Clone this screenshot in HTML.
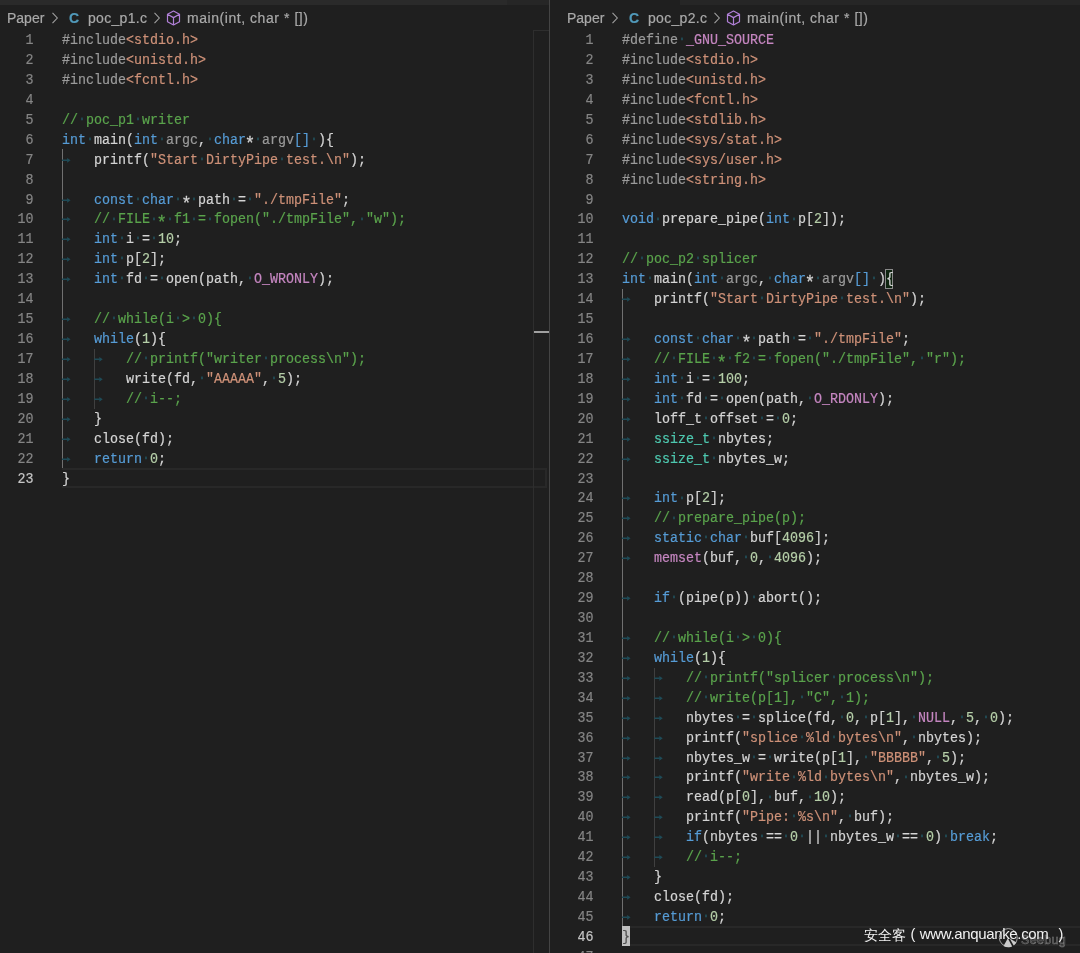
<!DOCTYPE html><html><head><meta charset="utf-8"><style>
*{margin:0;padding:0;box-sizing:border-box}
html,body{width:1080px;height:953px;overflow:hidden;background:#1f1f1f}
body{position:relative;font-family:"Liberation Mono",monospace}
.pane{position:absolute;top:0;height:953px;overflow:hidden;will-change:transform}
.strip{position:absolute;top:0;height:5px}
.cl{position:absolute;white-space:pre;font-size:14.5px;line-height:19.93px;height:19.93px;color:#d4d4d4;transform:scaleX(0.9195);transform-origin:0 0;padding-top:1.2px;-webkit-text-stroke:0.2px currentColor}
.ln{position:absolute;width:43.5px;text-align:right;font-size:14.5px;line-height:19.93px;color:#858585;padding-top:1.2px;-webkit-text-stroke:0.2px currentColor;transform:scaleX(0.9195);transform-origin:100% 0}
.ln.act{color:#c6c6c6}
.k{color:#569cd6}.ty{color:#4ec9b0}.m{color:#c586c0}.pa{color:#9a9a9a}.s{color:#ce9178}.n{color:#b5cea8}.c{color:#5aa34c}.pp{color:#9b9b9b}
i.d{font-style:normal;color:#22505c;-webkit-text-stroke:0.3px currentColor;position:relative;top:-0.9px}
.ast{display:inline-block;width:1ch;transform:translateY(3.6px) scale(1.3)}
b.t{display:inline-block;width:4ch;height:19.93px;vertical-align:top;position:relative}
b.t svg{position:absolute;left:0;top:0}
.g{position:absolute;width:1px;background:#404040}
.ga{position:absolute;width:1px;background:#707070}
.cur{position:absolute;height:20px;border:2px solid #282828;border-left:0}
.bc{position:absolute;top:9.4px;-webkit-text-stroke:0.2px currentColor;height:22px;font-family:"Liberation Sans",sans-serif;font-size:14px;color:#a9a9a9;white-space:pre;line-height:18px}
</style></head><body><div class="pane" style="left:0;width:549px"><div class="strip" style="left:0;width:507px;background:#2a2a2a"></div><div class="strip" style="left:507px;width:42px;background:#262626"></div><div class="bc" style="left:7px">Paper</div><svg style="position:absolute;left:51px;top:11.5px" width="8" height="12" viewBox="0 0 8 12"><path d="M1.5 0.8 L6.3 6 L1.5 11.2" fill="none" stroke="#a0a0a0" stroke-width="1.1"/></svg><div class="bc" style="left:69px;font-weight:bold;color:#519aba">C</div><div class="bc" style="left:88px;letter-spacing:0.3px">poc_p1.c</div><svg style="position:absolute;left:153px;top:11.5px" width="8" height="12" viewBox="0 0 8 12"><path d="M1.5 0.8 L6.3 6 L1.5 11.2" fill="none" stroke="#a0a0a0" stroke-width="1.1"/></svg><svg style="position:absolute;left:166px;top:10px" width="15" height="16" viewBox="0 0 15 16"><path d="M7.5 1 L13.5 4.3 L13.5 11.7 L7.5 15 L1.5 11.7 L1.5 4.3 Z M1.5 4.3 L7.5 7.6 L13.5 4.3 M7.5 7.6 L7.5 15" fill="none" stroke="#b180d7" stroke-width="1.2" stroke-linejoin="round"/></svg><div class="bc" style="left:187px;letter-spacing:0.55px">main(int, char * [])</div><div class="ga" style="left:62px;top:149.48px;height:318.88px"></div><div class="g" style="left:94px;top:348.78px;height:59.79px"></div><div class="ln" style="left:-10px;top:29.90px">1</div><div class="cl" style="left:62px;top:29.90px"><span class="pp">#include</span><span class="s">&lt;stdio.h&gt;</span></div><div class="ln" style="left:-10px;top:49.83px">2</div><div class="cl" style="left:62px;top:49.83px"><span class="pp">#include</span><span class="s">&lt;unistd.h&gt;</span></div><div class="ln" style="left:-10px;top:69.76px">3</div><div class="cl" style="left:62px;top:69.76px"><span class="pp">#include</span><span class="s">&lt;fcntl.h&gt;</span></div><div class="ln" style="left:-10px;top:89.69px">4</div><div class="cl" style="left:62px;top:89.69px"></div><div class="ln" style="left:-10px;top:109.62px">5</div><div class="cl" style="left:62px;top:109.62px"><span class="c">//</span><i class="d">·</i><span class="c">poc_p1</span><i class="d">·</i><span class="c">writer</span></div><div class="ln" style="left:-10px;top:129.55px">6</div><div class="cl" style="left:62px;top:129.55px"><span class="k">int</span><i class="d">·</i>main(<span class="k">int</span><i class="d">·</i><span class="pa">argc</span>,<i class="d">·</i><span class="k">char</span><span class="ast">*</span><i class="d">·</i><span class="pa">argv</span><span class="k">[]</span><i class="d">·</i>){</div><div class="ln" style="left:-10px;top:149.48px">7</div><div class="cl" style="left:62px;top:149.48px"><b class="t"><svg width="10" height="20" viewBox="0 0 10 20"><path d="M0 9.3 H6.2" stroke="#1f4b57" stroke-width="1.5"/><path d="M5.6 6.9 L9.3 9.3 L5.6 11.7 Z" fill="#1f4b57"/></svg></b>printf(<span class="s">&quot;Start</span><i class="d">·</i><span class="s">DirtyPipe</span><i class="d">·</i><span class="s">test.\n&quot;</span>);</div><div class="ln" style="left:-10px;top:169.41px">8</div><div class="cl" style="left:62px;top:169.41px"></div><div class="ln" style="left:-10px;top:189.34px">9</div><div class="cl" style="left:62px;top:189.34px"><b class="t"><svg width="10" height="20" viewBox="0 0 10 20"><path d="M0 9.3 H6.2" stroke="#1f4b57" stroke-width="1.5"/><path d="M5.6 6.9 L9.3 9.3 L5.6 11.7 Z" fill="#1f4b57"/></svg></b><span class="k">const</span><i class="d">·</i><span class="k">char</span><i class="d">·</i><span class="ast">*</span><i class="d">·</i>path<i class="d">·</i>=<i class="d">·</i><span class="s">&quot;./tmpFile&quot;</span>;</div><div class="ln" style="left:-10px;top:209.27px">10</div><div class="cl" style="left:62px;top:209.27px"><b class="t"><svg width="10" height="20" viewBox="0 0 10 20"><path d="M0 9.3 H6.2" stroke="#1f4b57" stroke-width="1.5"/><path d="M5.6 6.9 L9.3 9.3 L5.6 11.7 Z" fill="#1f4b57"/></svg></b><span class="c">//</span><i class="d">·</i><span class="c">FILE</span><i class="d">·</i><span class="c"><span class="ast">*</span></span><i class="d">·</i><span class="c">f1</span><i class="d">·</i><span class="c">=</span><i class="d">·</i><span class="c">fopen(&quot;./tmpFile&quot;,</span><i class="d">·</i><span class="c">&quot;w&quot;);</span></div><div class="ln" style="left:-10px;top:229.20px">11</div><div class="cl" style="left:62px;top:229.20px"><b class="t"><svg width="10" height="20" viewBox="0 0 10 20"><path d="M0 9.3 H6.2" stroke="#1f4b57" stroke-width="1.5"/><path d="M5.6 6.9 L9.3 9.3 L5.6 11.7 Z" fill="#1f4b57"/></svg></b><span class="k">int</span><i class="d">·</i>i<i class="d">·</i>=<i class="d">·</i><span class="n">10</span>;</div><div class="ln" style="left:-10px;top:249.13px">12</div><div class="cl" style="left:62px;top:249.13px"><b class="t"><svg width="10" height="20" viewBox="0 0 10 20"><path d="M0 9.3 H6.2" stroke="#1f4b57" stroke-width="1.5"/><path d="M5.6 6.9 L9.3 9.3 L5.6 11.7 Z" fill="#1f4b57"/></svg></b><span class="k">int</span><i class="d">·</i>p[<span class="n">2</span>];</div><div class="ln" style="left:-10px;top:269.06px">13</div><div class="cl" style="left:62px;top:269.06px"><b class="t"><svg width="10" height="20" viewBox="0 0 10 20"><path d="M0 9.3 H6.2" stroke="#1f4b57" stroke-width="1.5"/><path d="M5.6 6.9 L9.3 9.3 L5.6 11.7 Z" fill="#1f4b57"/></svg></b><span class="k">int</span><i class="d">·</i>fd<i class="d">·</i>=<i class="d">·</i>open(path,<i class="d">·</i><span class="m">O_WRONLY</span>);</div><div class="ln" style="left:-10px;top:288.99px">14</div><div class="cl" style="left:62px;top:288.99px"></div><div class="ln" style="left:-10px;top:308.92px">15</div><div class="cl" style="left:62px;top:308.92px"><b class="t"><svg width="10" height="20" viewBox="0 0 10 20"><path d="M0 9.3 H6.2" stroke="#1f4b57" stroke-width="1.5"/><path d="M5.6 6.9 L9.3 9.3 L5.6 11.7 Z" fill="#1f4b57"/></svg></b><span class="c">//</span><i class="d">·</i><span class="c">while(i</span><i class="d">·</i><span class="c">&gt;</span><i class="d">·</i><span class="c">0){</span></div><div class="ln" style="left:-10px;top:328.85px">16</div><div class="cl" style="left:62px;top:328.85px"><b class="t"><svg width="10" height="20" viewBox="0 0 10 20"><path d="M0 9.3 H6.2" stroke="#1f4b57" stroke-width="1.5"/><path d="M5.6 6.9 L9.3 9.3 L5.6 11.7 Z" fill="#1f4b57"/></svg></b><span class="k">while</span>(<span class="n">1</span>){</div><div class="ln" style="left:-10px;top:348.78px">17</div><div class="cl" style="left:62px;top:348.78px"><b class="t"><svg width="10" height="20" viewBox="0 0 10 20"><path d="M0 9.3 H6.2" stroke="#1f4b57" stroke-width="1.5"/><path d="M5.6 6.9 L9.3 9.3 L5.6 11.7 Z" fill="#1f4b57"/></svg></b><b class="t"><svg width="10" height="20" viewBox="0 0 10 20"><path d="M0 9.3 H6.2" stroke="#1f4b57" stroke-width="1.5"/><path d="M5.6 6.9 L9.3 9.3 L5.6 11.7 Z" fill="#1f4b57"/></svg></b><span class="c">//</span><i class="d">·</i><span class="c">printf(&quot;writer</span><i class="d">·</i><span class="c">process\n&quot;);</span></div><div class="ln" style="left:-10px;top:368.71px">18</div><div class="cl" style="left:62px;top:368.71px"><b class="t"><svg width="10" height="20" viewBox="0 0 10 20"><path d="M0 9.3 H6.2" stroke="#1f4b57" stroke-width="1.5"/><path d="M5.6 6.9 L9.3 9.3 L5.6 11.7 Z" fill="#1f4b57"/></svg></b><b class="t"><svg width="10" height="20" viewBox="0 0 10 20"><path d="M0 9.3 H6.2" stroke="#1f4b57" stroke-width="1.5"/><path d="M5.6 6.9 L9.3 9.3 L5.6 11.7 Z" fill="#1f4b57"/></svg></b>write(fd,<i class="d">·</i><span class="s">&quot;AAAAA&quot;</span>,<i class="d">·</i><span class="n">5</span>);</div><div class="ln" style="left:-10px;top:388.64px">19</div><div class="cl" style="left:62px;top:388.64px"><b class="t"><svg width="10" height="20" viewBox="0 0 10 20"><path d="M0 9.3 H6.2" stroke="#1f4b57" stroke-width="1.5"/><path d="M5.6 6.9 L9.3 9.3 L5.6 11.7 Z" fill="#1f4b57"/></svg></b><b class="t"><svg width="10" height="20" viewBox="0 0 10 20"><path d="M0 9.3 H6.2" stroke="#1f4b57" stroke-width="1.5"/><path d="M5.6 6.9 L9.3 9.3 L5.6 11.7 Z" fill="#1f4b57"/></svg></b><span class="c">//</span><i class="d">·</i><span class="c">i--;</span></div><div class="ln" style="left:-10px;top:408.57px">20</div><div class="cl" style="left:62px;top:408.57px"><b class="t"><svg width="10" height="20" viewBox="0 0 10 20"><path d="M0 9.3 H6.2" stroke="#1f4b57" stroke-width="1.5"/><path d="M5.6 6.9 L9.3 9.3 L5.6 11.7 Z" fill="#1f4b57"/></svg></b>}</div><div class="ln" style="left:-10px;top:428.50px">21</div><div class="cl" style="left:62px;top:428.50px"><b class="t"><svg width="10" height="20" viewBox="0 0 10 20"><path d="M0 9.3 H6.2" stroke="#1f4b57" stroke-width="1.5"/><path d="M5.6 6.9 L9.3 9.3 L5.6 11.7 Z" fill="#1f4b57"/></svg></b>close(fd);</div><div class="ln" style="left:-10px;top:448.43px">22</div><div class="cl" style="left:62px;top:448.43px"><b class="t"><svg width="10" height="20" viewBox="0 0 10 20"><path d="M0 9.3 H6.2" stroke="#1f4b57" stroke-width="1.5"/><path d="M5.6 6.9 L9.3 9.3 L5.6 11.7 Z" fill="#1f4b57"/></svg></b><span class="k">return</span><i class="d">·</i><span class="n">0</span>;</div><div class="ln act" style="left:-10px;top:468.36px">23</div><div class="cl" style="left:62px;top:468.36px">}</div><div class="cur" style="left:62px;top:467.86px;width:485px"></div><div style="position:absolute;left:533px;top:30px;width:1px;height:923px;background:#2e2e2e"></div><div style="position:absolute;left:533px;top:30px;width:16px;height:1px;background:#2e2e2e"></div><div style="position:absolute;left:534px;top:331px;width:15px;height:2px;background:#a0a0a0"></div></div><div style="position:absolute;left:549px;top:0;width:1px;height:953px;background:#444"></div><div class="pane" style="left:550px;width:530px"><div class="strip" style="left:130px;width:400px;background:#262626"></div><div style="position:absolute;left:-550px;top:0;width:1090px;height:953px"><div class="bc" style="left:567px">Paper</div><svg style="position:absolute;left:611px;top:11.5px" width="8" height="12" viewBox="0 0 8 12"><path d="M1.5 0.8 L6.3 6 L1.5 11.2" fill="none" stroke="#a0a0a0" stroke-width="1.1"/></svg><div class="bc" style="left:629px;font-weight:bold;color:#519aba">C</div><div class="bc" style="left:648px;letter-spacing:0.3px">poc_p2.c</div><svg style="position:absolute;left:713px;top:11.5px" width="8" height="12" viewBox="0 0 8 12"><path d="M1.5 0.8 L6.3 6 L1.5 11.2" fill="none" stroke="#a0a0a0" stroke-width="1.1"/></svg><svg style="position:absolute;left:726px;top:10px" width="15" height="16" viewBox="0 0 15 16"><path d="M7.5 1 L13.5 4.3 L13.5 11.7 L7.5 15 L1.5 11.7 L1.5 4.3 Z M1.5 4.3 L7.5 7.6 L13.5 4.3 M7.5 7.6 L7.5 15" fill="none" stroke="#b180d7" stroke-width="1.2" stroke-linejoin="round"/></svg><div class="bc" style="left:747px;letter-spacing:0.55px">main(int, char * [])</div><div class="ga" style="left:622px;top:288.99px;height:637.76px"></div><div class="g" style="left:654px;top:667.66px;height:199.30px"></div><div class="ln" style="left:550px;top:29.90px">1</div><div class="cl" style="left:622px;top:29.90px"><span class="pp">#define</span><i class="d">·</i><span class="m">_GNU_SOURCE</span></div><div class="ln" style="left:550px;top:49.83px">2</div><div class="cl" style="left:622px;top:49.83px"><span class="pp">#include</span><span class="s">&lt;stdio.h&gt;</span></div><div class="ln" style="left:550px;top:69.76px">3</div><div class="cl" style="left:622px;top:69.76px"><span class="pp">#include</span><span class="s">&lt;unistd.h&gt;</span></div><div class="ln" style="left:550px;top:89.69px">4</div><div class="cl" style="left:622px;top:89.69px"><span class="pp">#include</span><span class="s">&lt;fcntl.h&gt;</span></div><div class="ln" style="left:550px;top:109.62px">5</div><div class="cl" style="left:622px;top:109.62px"><span class="pp">#include</span><span class="s">&lt;stdlib.h&gt;</span></div><div class="ln" style="left:550px;top:129.55px">6</div><div class="cl" style="left:622px;top:129.55px"><span class="pp">#include</span><span class="s">&lt;sys/stat.h&gt;</span></div><div class="ln" style="left:550px;top:149.48px">7</div><div class="cl" style="left:622px;top:149.48px"><span class="pp">#include</span><span class="s">&lt;sys/user.h&gt;</span></div><div class="ln" style="left:550px;top:169.41px">8</div><div class="cl" style="left:622px;top:169.41px"><span class="pp">#include</span><span class="s">&lt;string.h&gt;</span></div><div class="ln" style="left:550px;top:189.34px">9</div><div class="cl" style="left:622px;top:189.34px"></div><div class="ln" style="left:550px;top:209.27px">10</div><div class="cl" style="left:622px;top:209.27px"><span class="k">void</span><i class="d">·</i>prepare_pipe(<span class="k">int</span><i class="d">·</i>p[<span class="n">2</span>]);</div><div class="ln" style="left:550px;top:229.20px">11</div><div class="cl" style="left:622px;top:229.20px"></div><div class="ln" style="left:550px;top:249.13px">12</div><div class="cl" style="left:622px;top:249.13px"><span class="c">//</span><i class="d">·</i><span class="c">poc_p2</span><i class="d">·</i><span class="c">splicer</span></div><div class="ln" style="left:550px;top:269.06px">13</div><div class="cl" style="left:622px;top:269.06px"><span class="k">int</span><i class="d">·</i>main(<span class="k">int</span><i class="d">·</i><span class="pa">argc</span>,<i class="d">·</i><span class="k">char</span><span class="ast">*</span><i class="d">·</i><span class="pa">argv</span><span class="k">[]</span><i class="d">·</i>){</div><div class="ln" style="left:550px;top:288.99px">14</div><div class="cl" style="left:622px;top:288.99px"><b class="t"><svg width="10" height="20" viewBox="0 0 10 20"><path d="M0 9.3 H6.2" stroke="#1f4b57" stroke-width="1.5"/><path d="M5.6 6.9 L9.3 9.3 L5.6 11.7 Z" fill="#1f4b57"/></svg></b>printf(<span class="s">&quot;Start</span><i class="d">·</i><span class="s">DirtyPipe</span><i class="d">·</i><span class="s">test.\n&quot;</span>);</div><div class="ln" style="left:550px;top:308.92px">15</div><div class="cl" style="left:622px;top:308.92px"></div><div class="ln" style="left:550px;top:328.85px">16</div><div class="cl" style="left:622px;top:328.85px"><b class="t"><svg width="10" height="20" viewBox="0 0 10 20"><path d="M0 9.3 H6.2" stroke="#1f4b57" stroke-width="1.5"/><path d="M5.6 6.9 L9.3 9.3 L5.6 11.7 Z" fill="#1f4b57"/></svg></b><span class="k">const</span><i class="d">·</i><span class="k">char</span><i class="d">·</i><span class="ast">*</span><i class="d">·</i>path<i class="d">·</i>=<i class="d">·</i><span class="s">&quot;./tmpFile&quot;</span>;</div><div class="ln" style="left:550px;top:348.78px">17</div><div class="cl" style="left:622px;top:348.78px"><b class="t"><svg width="10" height="20" viewBox="0 0 10 20"><path d="M0 9.3 H6.2" stroke="#1f4b57" stroke-width="1.5"/><path d="M5.6 6.9 L9.3 9.3 L5.6 11.7 Z" fill="#1f4b57"/></svg></b><span class="c">//</span><i class="d">·</i><span class="c">FILE</span><i class="d">·</i><span class="c"><span class="ast">*</span></span><i class="d">·</i><span class="c">f2</span><i class="d">·</i><span class="c">=</span><i class="d">·</i><span class="c">fopen(&quot;./tmpFile&quot;,</span><i class="d">·</i><span class="c">&quot;r&quot;);</span></div><div class="ln" style="left:550px;top:368.71px">18</div><div class="cl" style="left:622px;top:368.71px"><b class="t"><svg width="10" height="20" viewBox="0 0 10 20"><path d="M0 9.3 H6.2" stroke="#1f4b57" stroke-width="1.5"/><path d="M5.6 6.9 L9.3 9.3 L5.6 11.7 Z" fill="#1f4b57"/></svg></b><span class="k">int</span><i class="d">·</i>i<i class="d">·</i>=<i class="d">·</i><span class="n">100</span>;</div><div class="ln" style="left:550px;top:388.64px">19</div><div class="cl" style="left:622px;top:388.64px"><b class="t"><svg width="10" height="20" viewBox="0 0 10 20"><path d="M0 9.3 H6.2" stroke="#1f4b57" stroke-width="1.5"/><path d="M5.6 6.9 L9.3 9.3 L5.6 11.7 Z" fill="#1f4b57"/></svg></b><span class="k">int</span><i class="d">·</i>fd<i class="d">·</i>=<i class="d">·</i>open(path,<i class="d">·</i><span class="m">O_RDONLY</span>);</div><div class="ln" style="left:550px;top:408.57px">20</div><div class="cl" style="left:622px;top:408.57px"><b class="t"><svg width="10" height="20" viewBox="0 0 10 20"><path d="M0 9.3 H6.2" stroke="#1f4b57" stroke-width="1.5"/><path d="M5.6 6.9 L9.3 9.3 L5.6 11.7 Z" fill="#1f4b57"/></svg></b>loff_t<i class="d">·</i>offset<i class="d">·</i>=<i class="d">·</i><span class="n">0</span>;</div><div class="ln" style="left:550px;top:428.50px">21</div><div class="cl" style="left:622px;top:428.50px"><b class="t"><svg width="10" height="20" viewBox="0 0 10 20"><path d="M0 9.3 H6.2" stroke="#1f4b57" stroke-width="1.5"/><path d="M5.6 6.9 L9.3 9.3 L5.6 11.7 Z" fill="#1f4b57"/></svg></b><span class="ty">ssize_t</span><i class="d">·</i>nbytes;</div><div class="ln" style="left:550px;top:448.43px">22</div><div class="cl" style="left:622px;top:448.43px"><b class="t"><svg width="10" height="20" viewBox="0 0 10 20"><path d="M0 9.3 H6.2" stroke="#1f4b57" stroke-width="1.5"/><path d="M5.6 6.9 L9.3 9.3 L5.6 11.7 Z" fill="#1f4b57"/></svg></b><span class="ty">ssize_t</span><i class="d">·</i>nbytes_w;</div><div class="ln" style="left:550px;top:468.36px">23</div><div class="cl" style="left:622px;top:468.36px"></div><div class="ln" style="left:550px;top:488.29px">24</div><div class="cl" style="left:622px;top:488.29px"><b class="t"><svg width="10" height="20" viewBox="0 0 10 20"><path d="M0 9.3 H6.2" stroke="#1f4b57" stroke-width="1.5"/><path d="M5.6 6.9 L9.3 9.3 L5.6 11.7 Z" fill="#1f4b57"/></svg></b><span class="k">int</span><i class="d">·</i>p[<span class="n">2</span>];</div><div class="ln" style="left:550px;top:508.22px">25</div><div class="cl" style="left:622px;top:508.22px"><b class="t"><svg width="10" height="20" viewBox="0 0 10 20"><path d="M0 9.3 H6.2" stroke="#1f4b57" stroke-width="1.5"/><path d="M5.6 6.9 L9.3 9.3 L5.6 11.7 Z" fill="#1f4b57"/></svg></b><span class="c">//</span><i class="d">·</i><span class="c">prepare_pipe(p);</span></div><div class="ln" style="left:550px;top:528.15px">26</div><div class="cl" style="left:622px;top:528.15px"><b class="t"><svg width="10" height="20" viewBox="0 0 10 20"><path d="M0 9.3 H6.2" stroke="#1f4b57" stroke-width="1.5"/><path d="M5.6 6.9 L9.3 9.3 L5.6 11.7 Z" fill="#1f4b57"/></svg></b><span class="k">static</span><i class="d">·</i><span class="k">char</span><i class="d">·</i>buf[<span class="n">4096</span>];</div><div class="ln" style="left:550px;top:548.08px">27</div><div class="cl" style="left:622px;top:548.08px"><b class="t"><svg width="10" height="20" viewBox="0 0 10 20"><path d="M0 9.3 H6.2" stroke="#1f4b57" stroke-width="1.5"/><path d="M5.6 6.9 L9.3 9.3 L5.6 11.7 Z" fill="#1f4b57"/></svg></b><span class="m">memset</span>(buf,<i class="d">·</i><span class="n">0</span>,<i class="d">·</i><span class="n">4096</span>);</div><div class="ln" style="left:550px;top:568.01px">28</div><div class="cl" style="left:622px;top:568.01px"></div><div class="ln" style="left:550px;top:587.94px">29</div><div class="cl" style="left:622px;top:587.94px"><b class="t"><svg width="10" height="20" viewBox="0 0 10 20"><path d="M0 9.3 H6.2" stroke="#1f4b57" stroke-width="1.5"/><path d="M5.6 6.9 L9.3 9.3 L5.6 11.7 Z" fill="#1f4b57"/></svg></b><span class="k">if</span><i class="d">·</i>(pipe(p))<i class="d">·</i>abort();</div><div class="ln" style="left:550px;top:607.87px">30</div><div class="cl" style="left:622px;top:607.87px"></div><div class="ln" style="left:550px;top:627.80px">31</div><div class="cl" style="left:622px;top:627.80px"><b class="t"><svg width="10" height="20" viewBox="0 0 10 20"><path d="M0 9.3 H6.2" stroke="#1f4b57" stroke-width="1.5"/><path d="M5.6 6.9 L9.3 9.3 L5.6 11.7 Z" fill="#1f4b57"/></svg></b><span class="c">//</span><i class="d">·</i><span class="c">while(i</span><i class="d">·</i><span class="c">&gt;</span><i class="d">·</i><span class="c">0){</span></div><div class="ln" style="left:550px;top:647.73px">32</div><div class="cl" style="left:622px;top:647.73px"><b class="t"><svg width="10" height="20" viewBox="0 0 10 20"><path d="M0 9.3 H6.2" stroke="#1f4b57" stroke-width="1.5"/><path d="M5.6 6.9 L9.3 9.3 L5.6 11.7 Z" fill="#1f4b57"/></svg></b><span class="k">while</span>(<span class="n">1</span>){</div><div class="ln" style="left:550px;top:667.66px">33</div><div class="cl" style="left:622px;top:667.66px"><b class="t"><svg width="10" height="20" viewBox="0 0 10 20"><path d="M0 9.3 H6.2" stroke="#1f4b57" stroke-width="1.5"/><path d="M5.6 6.9 L9.3 9.3 L5.6 11.7 Z" fill="#1f4b57"/></svg></b><b class="t"><svg width="10" height="20" viewBox="0 0 10 20"><path d="M0 9.3 H6.2" stroke="#1f4b57" stroke-width="1.5"/><path d="M5.6 6.9 L9.3 9.3 L5.6 11.7 Z" fill="#1f4b57"/></svg></b><span class="c">//</span><i class="d">·</i><span class="c">printf(&quot;splicer</span><i class="d">·</i><span class="c">process\n&quot;);</span></div><div class="ln" style="left:550px;top:687.59px">34</div><div class="cl" style="left:622px;top:687.59px"><b class="t"><svg width="10" height="20" viewBox="0 0 10 20"><path d="M0 9.3 H6.2" stroke="#1f4b57" stroke-width="1.5"/><path d="M5.6 6.9 L9.3 9.3 L5.6 11.7 Z" fill="#1f4b57"/></svg></b><b class="t"><svg width="10" height="20" viewBox="0 0 10 20"><path d="M0 9.3 H6.2" stroke="#1f4b57" stroke-width="1.5"/><path d="M5.6 6.9 L9.3 9.3 L5.6 11.7 Z" fill="#1f4b57"/></svg></b><span class="c">//</span><i class="d">·</i><span class="c">write(p[1],</span><i class="d">·</i><span class="c">&quot;C&quot;,</span><i class="d">·</i><span class="c">1);</span></div><div class="ln" style="left:550px;top:707.52px">35</div><div class="cl" style="left:622px;top:707.52px"><b class="t"><svg width="10" height="20" viewBox="0 0 10 20"><path d="M0 9.3 H6.2" stroke="#1f4b57" stroke-width="1.5"/><path d="M5.6 6.9 L9.3 9.3 L5.6 11.7 Z" fill="#1f4b57"/></svg></b><b class="t"><svg width="10" height="20" viewBox="0 0 10 20"><path d="M0 9.3 H6.2" stroke="#1f4b57" stroke-width="1.5"/><path d="M5.6 6.9 L9.3 9.3 L5.6 11.7 Z" fill="#1f4b57"/></svg></b>nbytes<i class="d">·</i>=<i class="d">·</i>splice(fd,<i class="d">·</i><span class="n">0</span>,<i class="d">·</i>p[<span class="n">1</span>],<i class="d">·</i><span class="m">NULL</span>,<i class="d">·</i><span class="n">5</span>,<i class="d">·</i><span class="n">0</span>);</div><div class="ln" style="left:550px;top:727.45px">36</div><div class="cl" style="left:622px;top:727.45px"><b class="t"><svg width="10" height="20" viewBox="0 0 10 20"><path d="M0 9.3 H6.2" stroke="#1f4b57" stroke-width="1.5"/><path d="M5.6 6.9 L9.3 9.3 L5.6 11.7 Z" fill="#1f4b57"/></svg></b><b class="t"><svg width="10" height="20" viewBox="0 0 10 20"><path d="M0 9.3 H6.2" stroke="#1f4b57" stroke-width="1.5"/><path d="M5.6 6.9 L9.3 9.3 L5.6 11.7 Z" fill="#1f4b57"/></svg></b>printf(<span class="s">&quot;splice</span><i class="d">·</i><span class="s">%ld</span><i class="d">·</i><span class="s">bytes\n&quot;</span>,<i class="d">·</i>nbytes);</div><div class="ln" style="left:550px;top:747.38px">37</div><div class="cl" style="left:622px;top:747.38px"><b class="t"><svg width="10" height="20" viewBox="0 0 10 20"><path d="M0 9.3 H6.2" stroke="#1f4b57" stroke-width="1.5"/><path d="M5.6 6.9 L9.3 9.3 L5.6 11.7 Z" fill="#1f4b57"/></svg></b><b class="t"><svg width="10" height="20" viewBox="0 0 10 20"><path d="M0 9.3 H6.2" stroke="#1f4b57" stroke-width="1.5"/><path d="M5.6 6.9 L9.3 9.3 L5.6 11.7 Z" fill="#1f4b57"/></svg></b>nbytes_w<i class="d">·</i>=<i class="d">·</i>write(p[<span class="n">1</span>],<i class="d">·</i><span class="s">&quot;BBBBB&quot;</span>,<i class="d">·</i><span class="n">5</span>);</div><div class="ln" style="left:550px;top:767.31px">38</div><div class="cl" style="left:622px;top:767.31px"><b class="t"><svg width="10" height="20" viewBox="0 0 10 20"><path d="M0 9.3 H6.2" stroke="#1f4b57" stroke-width="1.5"/><path d="M5.6 6.9 L9.3 9.3 L5.6 11.7 Z" fill="#1f4b57"/></svg></b><b class="t"><svg width="10" height="20" viewBox="0 0 10 20"><path d="M0 9.3 H6.2" stroke="#1f4b57" stroke-width="1.5"/><path d="M5.6 6.9 L9.3 9.3 L5.6 11.7 Z" fill="#1f4b57"/></svg></b>printf(<span class="s">&quot;write</span><i class="d">·</i><span class="s">%ld</span><i class="d">·</i><span class="s">bytes\n&quot;</span>,<i class="d">·</i>nbytes_w);</div><div class="ln" style="left:550px;top:787.24px">39</div><div class="cl" style="left:622px;top:787.24px"><b class="t"><svg width="10" height="20" viewBox="0 0 10 20"><path d="M0 9.3 H6.2" stroke="#1f4b57" stroke-width="1.5"/><path d="M5.6 6.9 L9.3 9.3 L5.6 11.7 Z" fill="#1f4b57"/></svg></b><b class="t"><svg width="10" height="20" viewBox="0 0 10 20"><path d="M0 9.3 H6.2" stroke="#1f4b57" stroke-width="1.5"/><path d="M5.6 6.9 L9.3 9.3 L5.6 11.7 Z" fill="#1f4b57"/></svg></b>read(p[<span class="n">0</span>],<i class="d">·</i>buf,<i class="d">·</i><span class="n">10</span>);</div><div class="ln" style="left:550px;top:807.17px">40</div><div class="cl" style="left:622px;top:807.17px"><b class="t"><svg width="10" height="20" viewBox="0 0 10 20"><path d="M0 9.3 H6.2" stroke="#1f4b57" stroke-width="1.5"/><path d="M5.6 6.9 L9.3 9.3 L5.6 11.7 Z" fill="#1f4b57"/></svg></b><b class="t"><svg width="10" height="20" viewBox="0 0 10 20"><path d="M0 9.3 H6.2" stroke="#1f4b57" stroke-width="1.5"/><path d="M5.6 6.9 L9.3 9.3 L5.6 11.7 Z" fill="#1f4b57"/></svg></b>printf(<span class="s">&quot;Pipe:</span><i class="d">·</i><span class="s">%s\n&quot;</span>,<i class="d">·</i>buf);</div><div class="ln" style="left:550px;top:827.10px">41</div><div class="cl" style="left:622px;top:827.10px"><b class="t"><svg width="10" height="20" viewBox="0 0 10 20"><path d="M0 9.3 H6.2" stroke="#1f4b57" stroke-width="1.5"/><path d="M5.6 6.9 L9.3 9.3 L5.6 11.7 Z" fill="#1f4b57"/></svg></b><b class="t"><svg width="10" height="20" viewBox="0 0 10 20"><path d="M0 9.3 H6.2" stroke="#1f4b57" stroke-width="1.5"/><path d="M5.6 6.9 L9.3 9.3 L5.6 11.7 Z" fill="#1f4b57"/></svg></b><span class="k">if</span>(nbytes<i class="d">·</i>==<i class="d">·</i><span class="n">0</span><i class="d">·</i>||<i class="d">·</i>nbytes_w<i class="d">·</i>==<i class="d">·</i><span class="n">0</span>)<i class="d">·</i><span class="k">break</span>;</div><div class="ln" style="left:550px;top:847.03px">42</div><div class="cl" style="left:622px;top:847.03px"><b class="t"><svg width="10" height="20" viewBox="0 0 10 20"><path d="M0 9.3 H6.2" stroke="#1f4b57" stroke-width="1.5"/><path d="M5.6 6.9 L9.3 9.3 L5.6 11.7 Z" fill="#1f4b57"/></svg></b><b class="t"><svg width="10" height="20" viewBox="0 0 10 20"><path d="M0 9.3 H6.2" stroke="#1f4b57" stroke-width="1.5"/><path d="M5.6 6.9 L9.3 9.3 L5.6 11.7 Z" fill="#1f4b57"/></svg></b><span class="c">//</span><i class="d">·</i><span class="c">i--;</span></div><div class="ln" style="left:550px;top:866.96px">43</div><div class="cl" style="left:622px;top:866.96px"><b class="t"><svg width="10" height="20" viewBox="0 0 10 20"><path d="M0 9.3 H6.2" stroke="#1f4b57" stroke-width="1.5"/><path d="M5.6 6.9 L9.3 9.3 L5.6 11.7 Z" fill="#1f4b57"/></svg></b>}</div><div class="ln" style="left:550px;top:886.89px">44</div><div class="cl" style="left:622px;top:886.89px"><b class="t"><svg width="10" height="20" viewBox="0 0 10 20"><path d="M0 9.3 H6.2" stroke="#1f4b57" stroke-width="1.5"/><path d="M5.6 6.9 L9.3 9.3 L5.6 11.7 Z" fill="#1f4b57"/></svg></b>close(fd);</div><div class="ln" style="left:550px;top:906.82px">45</div><div class="cl" style="left:622px;top:906.82px"><b class="t"><svg width="10" height="20" viewBox="0 0 10 20"><path d="M0 9.3 H6.2" stroke="#1f4b57" stroke-width="1.5"/><path d="M5.6 6.9 L9.3 9.3 L5.6 11.7 Z" fill="#1f4b57"/></svg></b><span class="k">return</span><i class="d">·</i><span class="n">0</span>;</div><div class="ln act" style="left:550px;top:926.75px">46</div><div class="cl" style="left:622px;top:926.75px">}</div><div class="ln" style="left:550px;top:946.68px">47</div><div class="cl" style="left:622px;top:946.68px"></div><div class="cur" style="left:622px;top:926.25px;width:2000px"></div><div style="position:absolute;left:622px;top:926.25px;width:8px;height:20px;background:#c0c0c0"></div><div class="cl" style="left:622px;top:926.75px;color:#505050">}</div><div style="position:absolute;left:885px;top:268.86px;width:8.3px;height:20px;border:1px solid #8a8a8a;background:#0f2410"></div><div class="cl" style="left:886px;top:269.06px">{</div></div></div><svg style="position:absolute;left:996px;top:925px" width="70" height="26" viewBox="0 0 70 26"><circle cx="12.3" cy="12.6" r="9" fill="none" stroke="#b0b0b0" stroke-width="0.9"/><path d="M12.3 12.6 L20.5 17.5 A9.5 9.5 0 0 1 7.5 21 Z" fill="#cacaca"/><path d="M12.3 12.6 L17.5 22" stroke="#1f1f1f" stroke-width="1.6" fill="none"/><text x="25" y="19" font-family="Liberation Sans" font-size="12.5" fill="none" stroke="#777" stroke-width="0.6" letter-spacing="0.3">Seebug</text></svg><div style="font-family:'Liberation Sans',sans-serif;color:#f2f2f2;white-space:pre;position:absolute;left:864px;top:926.5px;font-size:14px">安全客</div><div style="font-family:'Liberation Sans',sans-serif;color:#f2f2f2;white-space:pre;position:absolute;left:910.5px;top:925.5px;font-size:14.5px">(</div><div style="font-family:'Liberation Sans',sans-serif;color:#f2f2f2;white-space:pre;position:absolute;left:919.8px;top:925px;font-size:15px;letter-spacing:-0.35px">www.anquanke.com</div><div style="font-family:'Liberation Sans',sans-serif;color:#f2f2f2;white-space:pre;position:absolute;left:1058.5px;top:925.5px;font-size:14.5px">)</div></body></html>
